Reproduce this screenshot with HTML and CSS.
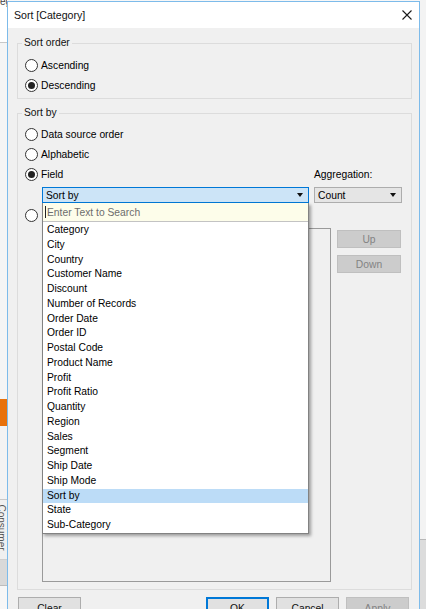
FILE: index.html
```html
<!DOCTYPE html>
<html>
<head>
<meta charset="utf-8">
<link rel="stylesheet" href="styles.css">
</head>
<body>
<div class="screen">
  <div class="bg-left">
    <div class="bg-top">eg</div>
    <div class="bg-space1"></div>
    <div class="bg-orange"></div>
    <div class="bg-space2"></div>
    <div class="bg-tab"><span class="bg-tab-text">Consumer</span></div>
    <div class="bg-gray"></div>
  </div>
  <div class="dialog">
    <div class="titlebar">
      <span class="title">Sort [Category]</span>
      <svg class="close" width="10" height="10" viewBox="0 0 10 10"><path d="M0.5 0.5 L9.5 9.5 M9.5 0.5 L0.5 9.5" stroke="#1a1a1a" stroke-width="1.1" fill="none"/></svg>
    </div>
    <div class="dlg-body">
      <fieldset class="group g-order">
        <legend>Sort order</legend>
        <div class="radio-row"><span class="radio"></span><span class="lbl">Ascending</span></div>
        <div class="radio-row"><span class="radio checked"></span><span class="lbl">Descending</span></div>
      </fieldset>
      <fieldset class="group g-by">
        <legend>Sort by</legend>
        <div class="radio-row"><span class="radio"></span><span class="lbl">Data source order</span></div>
        <div class="radio-row"><span class="radio"></span><span class="lbl">Alphabetic</span></div>
        <div class="radio-row field-row">
          <div class="field-left"><span class="radio checked"></span><span class="lbl">Field</span></div>
          <span class="agg-label">Aggregation:</span>
        </div>
        <div class="select-row">
          <div class="select-wrap">
            <div class="select active"><span>Sort by</span><span class="arrow"></span></div>
            <div class="dropdown">
              <div class="search"><span class="caret"></span><span class="placeholder">Enter Text to Search</span></div>
              <ul class="items">
                <li>Category</li>
                <li>City</li>
                <li>Country</li>
                <li>Customer Name</li>
                <li>Discount</li>
                <li>Number of Records</li>
                <li>Order Date</li>
                <li>Order ID</li>
                <li>Postal Code</li>
                <li>Product Name</li>
                <li>Profit</li>
                <li>Profit Ratio</li>
                <li>Quantity</li>
                <li>Region</li>
                <li>Sales</li>
                <li>Segment</li>
                <li>Ship Date</li>
                <li>Ship Mode</li>
                <li class="hl">Sort by</li>
                <li>State</li>
                <li>Sub-Category</li>
              </ul>
            </div>
          </div>
          <div class="select count"><span>Count</span><span class="arrow"></span></div>
        </div>
        <div class="radio-row manual-row"><span class="radio"></span></div>
        <div class="manual-area">
          <div class="listbox"></div>
          <div class="side-btns">
            <div class="btn disabled side up">Up</div>
            <div class="btn disabled side down">Down</div>
          </div>
        </div>
      </fieldset>
      <div class="footer">
        <div class="btn">Clear</div>
        <div class="footer-right">
          <div class="btn primary">OK</div>
          <div class="btn">Cancel</div>
          <div class="btn disabled">Apply</div>
        </div>
      </div>
    </div>
  </div>
  <div class="bg-right">
    <div class="bg-r-top"></div>
    <div class="bg-r-bottom"></div>
  </div>
</div>
</body>
</html>
```
FILE: styles.css
```css
* { box-sizing: border-box; }
html, body { margin: 0; padding: 0; }
body {
  width: 426px;
  height: 609px;
  overflow: hidden;
  font-family: "Liberation Sans", Arial, sans-serif;
  font-size: 10.3px;
  color: #000;
  background: #f7f7f7;
}
.screen {
  display: flex;
  width: 426px;
  height: 609px;
  overflow: hidden;
}

/* background app strips */
.bg-left {
  width: 7px;
  flex: none;
  display: flex;
  flex-direction: column;
  background: #f7f7f7;
  overflow: hidden;
}
.bg-left > div { flex: none; }
.bg-top {
  height: 43px;
  line-height: 4px;
  font-size: 10px;
  color: #444;
  border-bottom: 1px solid #c8c8c8;
  background: #fff;
  overflow: hidden;
}
.bg-space1 { height: 356px; background: #f5f5f5; }
.bg-orange { height: 27px; background: #e8720c; }
.bg-space2 { height: 74px; background: #f3f3f3; border-bottom: 1px solid #c9c9c9; }
.bg-tab {
  height: 60px;
  background: #f0f0f0;
  border-bottom: 1px solid #cfcfcf;
  position: relative;
  overflow: hidden;
}
.bg-tab-text {
  position: absolute;
  left: -22px;
  top: 22px;
  transform: rotate(90deg);
  font-size: 10px;
  color: #555;
  white-space: nowrap;
}
.bg-gray { height: 26px; background: #d9d9d9; border-bottom: 1px solid #bdbdbd; }

.bg-right {
  width: 6px;
  flex: none;
  display: flex;
  flex-direction: column;
}
.bg-r-top { flex: none; height: 540px; background: #f3f3f3; border-bottom: 1px solid #b8b8b8; }
.bg-r-bottom { flex: 1; background: #dcdcdc; }

/* dialog */
.dialog {
  width: 413px;
  flex: none;
  margin-top: 1px;
  border: 1px solid #7dbbea;
  border-bottom: none;
  background: #f0f0f0;
  display: flex;
  flex-direction: column;
  overflow: hidden;
}
.titlebar {
  flex: none;
  height: 26px;
  background: #fff;
  display: flex;
  align-items: center;
  justify-content: space-between;
  padding: 0 7px 0 6px;
}
.title { font-size: 10.6px; color: #111; }
.close { display: block; }

.dlg-body {
  flex: none;
  padding-top: 9px;
}

.group {
  margin: 0 7px 0 9px;
  border: 1px solid #dcdcdc;
  padding: 6px 4px 3px 4px;
  min-width: 0;
}
.group legend {
  padding: 0 2px;
  line-height: 12px;
  color: #111;
}
.g-by {
  margin-top: 8px;
  padding-top: 5px;
  padding-bottom: 7px;
}

.radio-row {
  height: 20px;
  display: flex;
  align-items: center;
  padding-left: 3px;
}
.radio {
  width: 13px;
  height: 13px;
  border: 1px solid #333;
  border-radius: 50%;
  background: #fff;
  flex: none;
  display: flex;
  align-items: center;
  justify-content: center;
}
.radio.checked::after {
  content: "";
  width: 7px;
  height: 7px;
  border-radius: 50%;
  background: #222;
}
.lbl { margin-left: 3px; }

.field-row { padding-left: 0; }
.field-left {
  width: 292px;
  display: flex;
  align-items: center;
  padding-left: 3px;
}

.select-row {
  display: flex;
  margin-top: 3px;
  padding-left: 20px;
  gap: 5px;
}
.select-wrap {
  position: relative;
  width: 267px;
}
.select {
  height: 16px;
  display: flex;
  align-items: center;
  justify-content: space-between;
  padding: 0 5px 0 3px;
  border: 1px solid #adadad;
  background: #e5e5e5;
}
.select.active {
  border-color: #0078d7;
  background: #cce4f7;
}
.select.count { width: 88px; }
.arrow {
  width: 0;
  height: 0;
  border-left: 3.5px solid transparent;
  border-right: 3.5px solid transparent;
  border-top: 4px solid #111;
}

.dropdown {
  position: absolute;
  top: 100%;
  left: 0;
  width: 100%;
  z-index: 5;
  background: #fff;
  border: 1px solid #828282;
  border-top: none;
  box-shadow: 2px 2px 3px rgba(0, 0, 0, 0.35);
}
.search {
  height: 19px;
  background: #fdfdea;
  border-bottom: 1px solid #c3c3c3;
  display: flex;
  align-items: center;
  padding-left: 2px;
}
.caret {
  width: 1px;
  height: 12px;
  background: #222;
  margin-right: 1px;
}
.placeholder { color: #6d6d6d; }
.items {
  list-style: none;
  margin: 0;
  padding: 1px 0 0 0;
}
.items li {
  height: 14.75px;
  line-height: 14.75px;
  padding-left: 4px;
  white-space: nowrap;
}
.items li.hl { background: #bcdcf7; }

.manual-row { margin-top: 2px; }

.manual-area {
  display: flex;
  margin-top: 3px;
  padding-left: 20px;
}
.listbox {
  width: 289px;
  height: 354px;
  border: 1px solid #9a9a9a;
  background: #f0f0f0;
}
.side-btns {
  margin-left: 6px;
  width: 64px;
  display: flex;
  flex-direction: column;
}
.btn {
  flex: none;
  height: 23px;
  width: 63px;
  border: 1px solid #adadad;
  background: #e1e1e1;
  display: flex;
  align-items: center;
  justify-content: center;
  color: #111;
}
.btn.disabled {
  background: #cccccc;
  border-color: #bfbfbf;
  color: #838383;
}
.btn.side { width: 64px; height: 18px; }
.btn.up { margin-top: 2px; }
.btn.down { margin-top: 7px; }
.btn.primary {
  border-color: #0078d7;
  box-shadow: inset 0 0 0 1px #0078d7;
}

.footer {
  display: flex;
  justify-content: space-between;
  margin-top: 7px;
  padding: 0 10px;
}
.footer-right {
  display: flex;
  gap: 7px;
}
```
